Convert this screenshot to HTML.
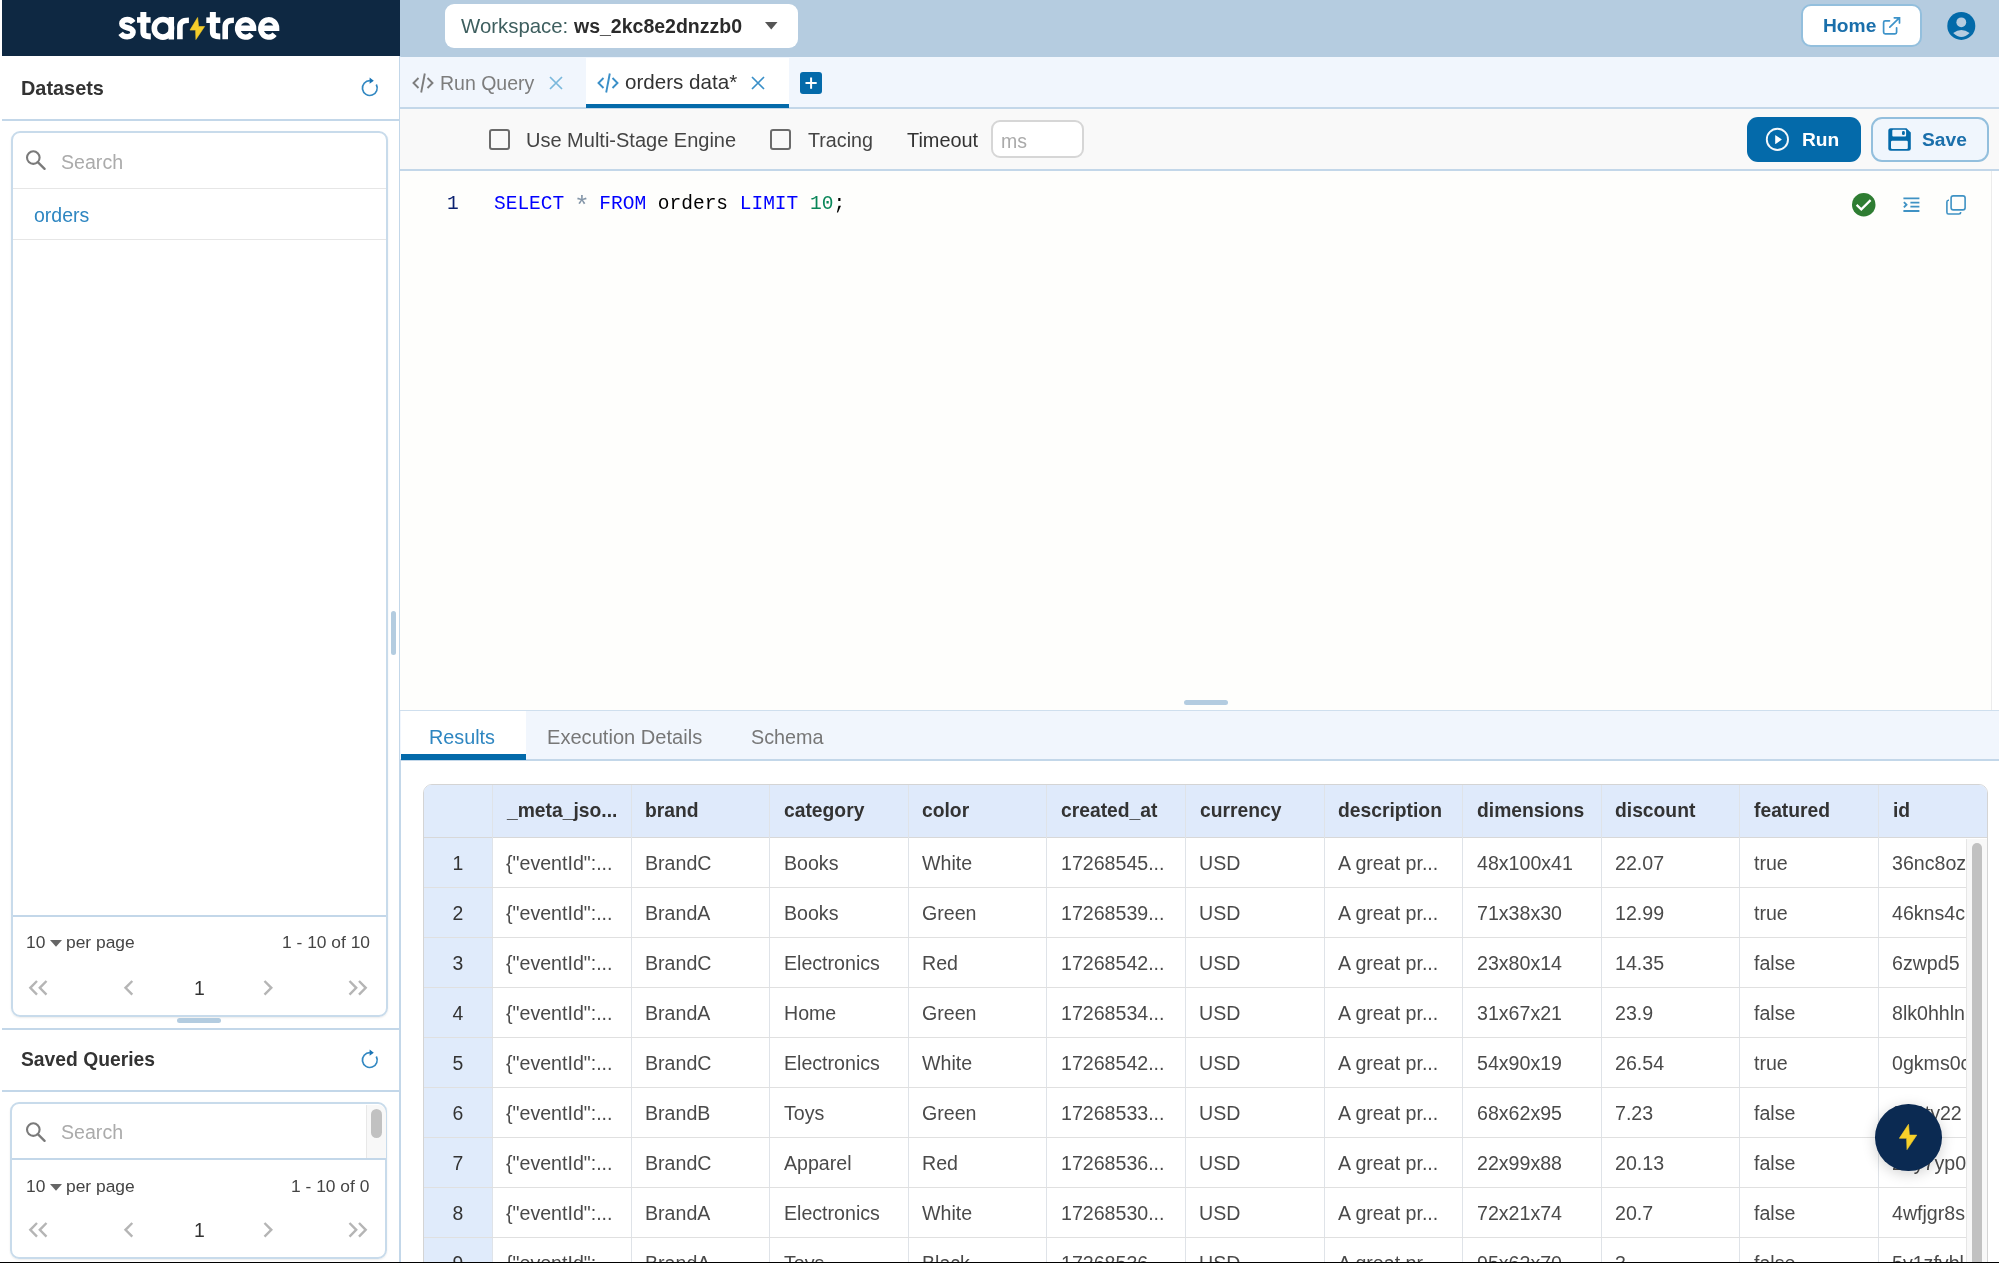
<!DOCTYPE html><html><head><meta charset="utf-8"><style>html,body{margin:0;padding:0;}div{will-change:transform;}body{width:1999px;height:1263px;overflow:hidden;position:relative;background:#fff;font-family:"Liberation Sans",sans-serif;}</style></head><body>
<div style="position:absolute;left:2px;top:0px;width:398px;height:56px;background:#0e2842;"></div>
<svg style="position:absolute;left:0px;top:0px;overflow:visible" width="400" height="56" viewBox="0 0 400 56"><g fill="none" stroke="#fff" stroke-width="5.6"><path d="M133.2 22.6 C131.8 20.6 129.8 19.6 127.2 19.6 C124 19.6 121.9 21.2 121.9 23.6 C121.9 26.2 124.3 27.1 127.4 27.8 C130.7 28.5 133 29.5 133 32.3 C133 35.1 130.6 36.7 127.2 36.7 C124.6 36.7 122.3 35.6 120.6 33.3"/><path d="M143.35 12 V31.5 C143.35 35.6 145.3 36.4 150.8 36.4" stroke-width="6"/><path d="M137 19.95 H150.6" stroke-width="5.6"/><ellipse cx="162.9" cy="28.3" rx="8.6" ry="8.8" stroke-width="5.6"/><path d="M171.3 17 V39.5" stroke-width="5.5"/><path d="M179.9 39.2 V27 C179.9 22 183 20.3 188.9 20.3" stroke-width="5.6"/><path d="M212.85 12 V31.5 C212.85 35.6 214.8 36.4 220.3 36.4" stroke-width="6"/><path d="M206.3 20.2 H220.3" stroke-width="5.6"/><path d="M225.2 39.2 V27 C225.2 22 228.2 20.3 233.9 20.3" stroke-width="5.6"/><path d="M237.4 28.3 H253.6 A8 8.7 0 1 0 251.6 34.2" stroke-width="5.4"/><path d="M260.9 28.3 H276.6 A7.9 8.7 0 1 0 274.6 34.2" stroke-width="5.4"/></g><path d="M197.6 17.5 L190 30.1 L195.6 30.1 L195.9 39.5 L204.6 26.5 L198.6 26.5 Z" fill="#f5cd2a" stroke="#f5cd2a" stroke-width="0.6" stroke-linejoin="round"/></svg>
<div style="position:absolute;left:400px;top:0px;width:1599px;height:57px;background:#b5cce0;"></div>
<div style="position:absolute;left:444.5px;top:3.5px;width:353px;height:44px;background:#fff;border-radius:9px;"></div>
<div style="position:absolute;left:460.50px;top:10.93px;line-height:30px;font-size:20.4px;font-family:'Liberation Sans', sans-serif;color:#3e5f5f;font-weight:400;white-space:pre;">Workspace:</div>
<div style="position:absolute;left:573.50px;top:11.24px;line-height:30px;font-size:19.5px;font-family:'Liberation Sans', sans-serif;color:#2b2b2b;font-weight:700;white-space:pre;">ws_2kc8e2dnzzb0</div>
<svg style="position:absolute;left:765px;top:22px;overflow:visible" width="13" height="8" viewBox="0 0 13 8"><path d="M0 0 L12.5 0 L6.25 7.5 Z" fill="#555"/></svg>
<div style="position:absolute;left:1801.3px;top:4px;width:120.8px;height:43.2px;background:#fff;border:2px solid #93bfdd;border-radius:10px;box-sizing:border-box;"></div>
<div style="position:absolute;left:1823.00px;top:11.35px;line-height:30px;font-size:19.2px;font-family:'Liberation Sans', sans-serif;color:#1a6fab;font-weight:700;white-space:pre;">Home</div>
<svg style="position:absolute;left:1883px;top:17px;overflow:visible" width="18" height="18" viewBox="0 0 18 18"><path d="M6.5 3.8 H2.2 Q0.6 3.8 0.6 5.4 V15.2 Q0.6 16.8 2.2 16.8 H12 Q13.6 16.8 13.6 15.2 V10.8" fill="none" stroke="#3d93c9" stroke-width="1.7" stroke-linecap="round"/><path d="M6.8 10.2 L16.3 0.9 M11.3 0.8 H16.5 V6" fill="none" stroke="#3d93c9" stroke-width="1.7" stroke-linecap="round"/></svg>
<svg style="position:absolute;left:1946.5px;top:12px;overflow:visible" width="28" height="28" viewBox="0 0 28 28"><circle cx="14.3" cy="13.9" r="14" fill="#036aa9"/><circle cx="14.3" cy="10.3" r="4.9" fill="#b5cce0"/><path d="M6.2 21 Q14.4 15.2 22.6 21 Q14.4 28.8 6.2 21 Z" fill="#b5cce0"/></svg>
<div style="position:absolute;left:398.7px;top:56px;width:1.6px;height:1207px;background:#c3d7e9;"></div>
<div style="position:absolute;left:20.50px;top:73.30px;line-height:30px;font-size:19.9px;font-family:'Liberation Sans', sans-serif;color:#333;font-weight:700;white-space:pre;">Datasets</div>
<svg style="position:absolute;left:361px;top:77px;overflow:visible" width="18" height="20" viewBox="0 0 18 20"><path d="M15.3 7.5 A7.4 7.4 0 1 1 8.9 3.65" fill="none" stroke="#3288c2" stroke-width="1.7"/><path d="M8.6 0.6 L12.8 3.65 L8.6 6.7 Z" fill="#1a74b4"/></svg>
<div style="position:absolute;left:2px;top:118.6px;width:397px;height:1.6px;background:#c3d7e9;"></div>
<div style="position:absolute;left:10.5px;top:131.3px;width:377px;height:885.5px;border:2px solid #c8dbeb;box-shadow:0 1px 2px rgba(0,0,0,0.08);border-radius:9px;box-sizing:border-box;"></div>
<svg style="position:absolute;left:26px;top:150px;overflow:visible" width="20" height="20" viewBox="0 0 20 20"><circle cx="7.3" cy="7.6" r="6.3" fill="none" stroke="#7a7a7a" stroke-width="2.1"/><path d="M11.8 12.1 L18.6 18.9" stroke="#7a7a7a" stroke-width="2.3" stroke-linecap="round"/></svg>
<div style="position:absolute;left:61.00px;top:146.51px;line-height:30px;font-size:19.6px;font-family:'Liberation Sans', sans-serif;color:#ababab;font-weight:400;white-space:pre;">Search</div>
<div style="position:absolute;left:12.5px;top:188px;width:373px;height:1.2px;background:#e6e6e6;"></div>
<div style="position:absolute;left:33.50px;top:199.74px;line-height:30px;font-size:19.5px;font-family:'Liberation Sans', sans-serif;color:#2e86c1;font-weight:400;white-space:pre;">orders</div>
<div style="position:absolute;left:12.5px;top:239.2px;width:373px;height:1.2px;background:#e6e6e6;"></div>
<div style="position:absolute;left:12.5px;top:914.6px;width:373px;height:1.6px;background:#c3d7e9;"></div>
<div style="position:absolute;left:25.50px;top:927.47px;line-height:30px;font-size:17.4px;font-family:'Liberation Sans', sans-serif;color:#444;font-weight:400;white-space:pre;">10</div>
<svg style="position:absolute;left:49.8px;top:940.2px;overflow:visible" width="12" height="7" viewBox="0 0 12 7"><path d="M0 0 L12 0 L6 6.7 Z" fill="#666"/></svg>
<div style="position:absolute;left:65.50px;top:927.47px;line-height:30px;font-size:17.4px;font-family:'Liberation Sans', sans-serif;color:#444;font-weight:400;white-space:pre;">per page</div>
<div style="position:absolute;right:1629.50px;top:927.47px;line-height:30px;font-size:17.4px;font-family:'Liberation Sans', sans-serif;color:#444;font-weight:400;white-space:pre;">1 - 10 of 10</div>
<svg style="position:absolute;left:28.3px;top:979.5px;overflow:visible" width="20" height="16" viewBox="0 0 20 16"><path d="M9 1 L2.3 7.8 L9 14.6 M18.5 1 L11.8 7.8 L18.5 14.6" fill="none" stroke="#b5b5b5" stroke-width="2.4"/></svg>
<svg style="position:absolute;left:123.3px;top:979.5px;overflow:visible" width="11" height="16" viewBox="0 0 11 16"><path d="M9.3 1 L2.5 7.8 L9.3 14.6" fill="none" stroke="#b5b5b5" stroke-width="2.4"/></svg>
<div style="position:absolute;left:194.00px;top:972.78px;line-height:30px;font-size:19.4px;font-family:'Liberation Sans', sans-serif;color:#333;font-weight:400;white-space:pre;">1</div>
<svg style="position:absolute;left:262.5px;top:979.5px;overflow:visible" width="11" height="16" viewBox="0 0 11 16"><path d="M1.5 1 L8.3 7.8 L1.5 14.6" fill="none" stroke="#b5b5b5" stroke-width="2.4"/></svg>
<svg style="position:absolute;left:347.6px;top:979.5px;overflow:visible" width="20" height="16" viewBox="0 0 20 16"><path d="M1.5 1 L8.2 7.8 L1.5 14.6 M11 1 L17.7 7.8 L11 14.6" fill="none" stroke="#b5b5b5" stroke-width="2.4"/></svg>
<div style="position:absolute;left:177px;top:1018px;width:44px;height:5px;background:#b3cce0;border-radius:3px;"></div>
<div style="position:absolute;left:390.5px;top:611px;width:5px;height:44px;background:#b3cce0;border-radius:3px;"></div>
<div style="position:absolute;left:2px;top:1027.6px;width:397px;height:1.6px;background:#c3d7e9;"></div>
<div style="position:absolute;left:20.50px;top:1044.61px;line-height:30px;font-size:19.3px;font-family:'Liberation Sans', sans-serif;color:#333;font-weight:700;white-space:pre;">Saved Queries</div>
<svg style="position:absolute;left:361px;top:1049px;overflow:visible" width="18" height="20" viewBox="0 0 18 20"><path d="M15.3 7.5 A7.4 7.4 0 1 1 8.9 3.65" fill="none" stroke="#3288c2" stroke-width="1.7"/><path d="M8.6 0.6 L12.8 3.65 L8.6 6.7 Z" fill="#1a74b4"/></svg>
<div style="position:absolute;left:2px;top:1090px;width:397px;height:1.6px;background:#c3d7e9;"></div>
<div style="position:absolute;left:10.3px;top:1102.3px;width:377px;height:157px;border:2px solid #c8dbeb;box-shadow:0 1px 2px rgba(0,0,0,0.08);border-radius:9px;box-sizing:border-box;"></div>
<svg style="position:absolute;left:26px;top:1121.5px;overflow:visible" width="20" height="20" viewBox="0 0 20 20"><circle cx="7.3" cy="7.6" r="6.3" fill="none" stroke="#7a7a7a" stroke-width="2.1"/><path d="M11.8 12.1 L18.6 18.9" stroke="#7a7a7a" stroke-width="2.3" stroke-linecap="round"/></svg>
<div style="position:absolute;left:61.00px;top:1117.01px;line-height:30px;font-size:19.6px;font-family:'Liberation Sans', sans-serif;color:#ababab;font-weight:400;white-space:pre;">Search</div>
<div style="position:absolute;left:366px;top:1104.5px;width:19.5px;height:54px;background:#f8f8f8;border-left:1px solid #e8e8e8;box-sizing:border-box;border-top-right-radius:8px;"></div>
<div style="position:absolute;left:371.2px;top:1108.5px;width:10.7px;height:29px;background:#c1c1c1;border-radius:6px;"></div>
<div style="position:absolute;left:12px;top:1157.7px;width:373.5px;height:1.6px;background:#c3d7e9;"></div>
<div style="position:absolute;left:25.50px;top:1170.77px;line-height:30px;font-size:17.4px;font-family:'Liberation Sans', sans-serif;color:#444;font-weight:400;white-space:pre;">10</div>
<svg style="position:absolute;left:49.8px;top:1183.5px;overflow:visible" width="12" height="7" viewBox="0 0 12 7"><path d="M0 0 L12 0 L6 6.7 Z" fill="#666"/></svg>
<div style="position:absolute;left:65.50px;top:1170.77px;line-height:30px;font-size:17.4px;font-family:'Liberation Sans', sans-serif;color:#444;font-weight:400;white-space:pre;">per page</div>
<div style="position:absolute;right:1629.50px;top:1170.77px;line-height:30px;font-size:17.4px;font-family:'Liberation Sans', sans-serif;color:#444;font-weight:400;white-space:pre;">1 - 10 of 0</div>
<svg style="position:absolute;left:28.3px;top:1222px;overflow:visible" width="20" height="16" viewBox="0 0 20 16"><path d="M9 1 L2.3 7.8 L9 14.6 M18.5 1 L11.8 7.8 L18.5 14.6" fill="none" stroke="#b5b5b5" stroke-width="2.4"/></svg>
<svg style="position:absolute;left:123.3px;top:1222px;overflow:visible" width="11" height="16" viewBox="0 0 11 16"><path d="M9.3 1 L2.5 7.8 L9.3 14.6" fill="none" stroke="#b5b5b5" stroke-width="2.4"/></svg>
<div style="position:absolute;left:194.00px;top:1215.28px;line-height:30px;font-size:19.4px;font-family:'Liberation Sans', sans-serif;color:#333;font-weight:400;white-space:pre;">1</div>
<svg style="position:absolute;left:262.5px;top:1222px;overflow:visible" width="11" height="16" viewBox="0 0 11 16"><path d="M1.5 1 L8.3 7.8 L1.5 14.6" fill="none" stroke="#b5b5b5" stroke-width="2.4"/></svg>
<svg style="position:absolute;left:347.6px;top:1222px;overflow:visible" width="20" height="16" viewBox="0 0 20 16"><path d="M1.5 1 L8.2 7.8 L1.5 14.6 M11 1 L17.7 7.8 L11 14.6" fill="none" stroke="#b5b5b5" stroke-width="2.4"/></svg>
<div style="position:absolute;left:400px;top:57px;width:1599px;height:51px;background:#f1f6fd;"></div>
<div style="position:absolute;left:400px;top:107.2px;width:1599px;height:1.7px;background:#c3d7e9;"></div>
<svg style="position:absolute;left:411.5px;top:73px;overflow:visible" width="22" height="20" viewBox="0 0 22 20"><path d="M6.5 5 L1.5 10 L6.5 15 M15.5 5 L20.5 10 L15.5 15" fill="none" stroke="#7d7d7d" stroke-width="1.9"/><path d="M12.8 0.5 L9.2 19.5" stroke="#7d7d7d" stroke-width="1.9"/></svg>
<div style="position:absolute;left:439.50px;top:68.24px;line-height:30px;font-size:19.5px;font-family:'Liberation Sans', sans-serif;color:#7d7d7d;font-weight:400;white-space:pre;">Run Query</div>
<svg style="position:absolute;left:548.5px;top:75.5px;overflow:visible" width="14" height="14" viewBox="0 0 14 14"><path d="M1 1 L13 13 M13 1 L1 13" stroke="#7ab8dc" stroke-width="1.7"/></svg>
<div style="position:absolute;left:586px;top:58px;width:202.5px;height:49.5px;background:#fff;"></div>
<div style="position:absolute;left:586px;top:103.5px;width:202.5px;height:4px;background:#046aaa;"></div>
<svg style="position:absolute;left:596.5px;top:73px;overflow:visible" width="22" height="20" viewBox="0 0 22 20"><path d="M6.5 5 L1.5 10 L6.5 15 M15.5 5 L20.5 10 L15.5 15" fill="none" stroke="#3a8fc8" stroke-width="1.9"/><path d="M12.8 0.5 L9.2 19.5" stroke="#3a8fc8" stroke-width="1.9"/></svg>
<div style="position:absolute;left:625.00px;top:67.26px;line-height:30px;font-size:20.6px;font-family:'Liberation Sans', sans-serif;color:#333;font-weight:400;white-space:pre;">orders data*</div>
<svg style="position:absolute;left:751px;top:75.5px;overflow:visible" width="14" height="14" viewBox="0 0 14 14"><path d="M1 1 L13 13 M13 1 L1 13" stroke="#3a8fc8" stroke-width="1.7"/></svg>
<div style="position:absolute;left:799.75px;top:71.6px;width:22.2px;height:22.2px;background:#046aaa;border-radius:3px;"></div>
<svg style="position:absolute;left:799.75px;top:71.6px;overflow:visible" width="22.2" height="22.2" viewBox="0 0 22.2 22.2"><path d="M11.1 5.5 V16.7 M5.5 11.1 H16.7" stroke="#fff" stroke-width="2"/></svg>
<div style="position:absolute;left:400px;top:108.7px;width:1599px;height:61px;background:#f9f9f9;"></div>
<div style="position:absolute;left:400px;top:169.2px;width:1599px;height:1.7px;background:#c3d7e9;"></div>
<div style="position:absolute;left:489px;top:128.6px;width:21px;height:21px;border:2px solid #6b6b6b;border-radius:3px;box-sizing:border-box;"></div>
<div style="position:absolute;left:526.00px;top:124.57px;line-height:30px;font-size:20.0px;font-family:'Liberation Sans', sans-serif;color:#444;font-weight:400;white-space:pre;">Use Multi-Stage Engine</div>
<div style="position:absolute;left:770px;top:129px;width:21px;height:21px;border:2px solid #6b6b6b;border-radius:3px;box-sizing:border-box;"></div>
<div style="position:absolute;left:808.00px;top:124.57px;line-height:30px;font-size:19.7px;font-family:'Liberation Sans', sans-serif;color:#444;font-weight:400;white-space:pre;">Tracing</div>
<div style="position:absolute;left:907.00px;top:124.50px;line-height:30px;font-size:19.9px;font-family:'Liberation Sans', sans-serif;color:#333;font-weight:400;white-space:pre;">Timeout</div>
<div style="position:absolute;left:990.7px;top:120.3px;width:92.7px;height:38px;background:#fff;border:2px solid #d6d6d6;border-radius:9px;box-sizing:border-box;"></div>
<div style="position:absolute;left:1001.00px;top:126.04px;line-height:30px;font-size:19.5px;font-family:'Liberation Sans', sans-serif;color:#aaaaaa;font-weight:400;white-space:pre;">ms</div>
<div style="position:absolute;left:1746.7px;top:117.1px;width:113.8px;height:44.7px;background:#046aaa;border-radius:11px;"></div>
<svg style="position:absolute;left:1765px;top:128px;overflow:visible" width="24" height="24" viewBox="0 0 24 24"><circle cx="12.4" cy="11.4" r="10.6" fill="none" stroke="#f4f8fb" stroke-width="1.9"/><path d="M10.2 7.4 V15.7 Q10.2 16.1 10.6 15.9 L16.6 11.8 Q16.9 11.5 16.6 11.3 L10.6 7.2 Q10.2 7 10.2 7.4 Z" fill="#fff"/></svg>
<div style="position:absolute;left:1802.00px;top:125.05px;line-height:30px;font-size:19.2px;font-family:'Liberation Sans', sans-serif;color:#fff;font-weight:700;white-space:pre;">Run</div>
<div style="position:absolute;left:1871.3px;top:117.2px;width:117.6px;height:44.6px;background:#f0f6fd;border:2px solid #93bfdd;border-radius:11px;box-sizing:border-box;"></div>
<svg style="position:absolute;left:1888px;top:128px;overflow:visible" width="23" height="23" viewBox="0 0 23 23"><path d="M2.8 0.3 H18.5 L22.8 4.6 V20.2 Q22.8 22.7 20.3 22.7 H2.8 Q0.3 22.7 0.3 20.2 V2.8 Q0.3 0.3 2.8 0.3 Z" fill="#046aaa"/><rect x="4.3" y="1.8" width="13.8" height="6.7" rx="1" fill="#f0f6fd"/><rect x="14" y="3.1" width="2.8" height="4" rx="1.3" fill="#046aaa"/><rect x="3" y="12.7" width="16.8" height="8.3" rx="1.2" fill="#f0f6fd"/></svg>
<div style="position:absolute;left:1921.50px;top:125.05px;line-height:30px;font-size:19.2px;font-family:'Liberation Sans', sans-serif;color:#1a6fab;font-weight:700;white-space:pre;">Save</div>
<div style="position:absolute;left:400px;top:170.7px;width:1591px;height:539.3px;background:#fefefc;"></div>
<div style="position:absolute;left:1991px;top:170.7px;width:1px;height:539.3px;background:#ececec;"></div>
<div style="position:absolute;left:447.00px;top:188.55px;line-height:30px;font-size:19.5px;font-family:'Liberation Mono', monospace;color:#0b216f;font-weight:400;white-space:pre;">1</div>
<div style="position:absolute;left:494.00px;top:188.55px;line-height:30px;font-size:19.5px;font-family:'Liberation Mono', monospace;color:#000;font-weight:400;white-space:pre;"><span style="color:#0000ff">SELECT</span> <span style="color:#8496a8;display:inline-block;transform:translateY(3.5px) scale(1.35)">*</span> <span style="color:#0000ff">FROM</span> <span style="color:#000">orders</span> <span style="color:#0000ff">LIMIT</span> <span style="color:#098658">10</span><span style="color:#000">;</span></div>
<svg style="position:absolute;left:1852.3px;top:192.7px;overflow:visible" width="23.5" height="23.5" viewBox="0 0 23.5 23.5"><circle cx="11.75" cy="11.75" r="11.75" fill="#2e7d32"/><path d="M4.6 11.9 L9.3 16.4 L18.6 7.1" fill="none" stroke="#fff" stroke-width="2.2"/></svg>
<svg style="position:absolute;left:1902.8px;top:197px;overflow:visible" width="17" height="15" viewBox="0 0 17 15"><path d="M0.4 1.3 H16.4 M7.4 5.6 H16.4 M7.4 9.7 H16.4 M0.4 14 H16.4" stroke="#3f92c4" stroke-width="1.8"/><path d="M0.9 5.1 L3.5 7.7 L0.9 10.4" fill="none" stroke="#3f92c4" stroke-width="1.9"/></svg>
<svg style="position:absolute;left:1945.8px;top:194.7px;overflow:visible" width="20" height="20" viewBox="0 0 20 20"><rect x="5.1" y="0.9" width="14" height="14" rx="2.2" fill="none" stroke="#3f92c4" stroke-width="1.6"/><path d="M3 5.3 H2.5 Q0.9 5.3 0.9 7 V17.3 Q0.9 19 2.5 19 H12.9 Q14.6 19 14.6 17.3 V16.9" fill="none" stroke="#3f92c4" stroke-width="1.6"/></svg>
<div style="position:absolute;left:1183.8px;top:700px;width:44px;height:5.3px;background:#b3cce0;border-radius:3px;"></div>
<div style="position:absolute;left:400px;top:710px;width:1599px;height:50px;background:#f1f6fd;"></div>
<div style="position:absolute;left:400px;top:709.7px;width:1599px;height:1.2px;background:#cfdfee;"></div>
<div style="position:absolute;left:400px;top:758.8px;width:1599px;height:1.7px;background:#c3d7e9;"></div>
<div style="position:absolute;left:400.5px;top:711px;width:124.5px;height:48.5px;background:#fff;"></div>
<div style="position:absolute;left:400.5px;top:754px;width:124.5px;height:5.5px;background:#046aaa;"></div>
<div style="position:absolute;left:429.00px;top:722.34px;line-height:30px;font-size:19.8px;font-family:'Liberation Sans', sans-serif;color:#2e86c1;font-weight:400;white-space:pre;">Results</div>
<div style="position:absolute;left:547.00px;top:722.24px;line-height:30px;font-size:20.1px;font-family:'Liberation Sans', sans-serif;color:#777;font-weight:400;white-space:pre;">Execution Details</div>
<div style="position:absolute;left:751.00px;top:722.34px;line-height:30px;font-size:19.8px;font-family:'Liberation Sans', sans-serif;color:#777;font-weight:400;white-space:pre;">Schema</div>
<div style="position:absolute;left:423.3px;top:783.7px;width:1565.0px;height:600px;border:1.5px solid #d4d4d4;border-radius:9px 9px 0 0;box-sizing:border-box;overflow:hidden;background:#fff;">
<div style="position:absolute;left:0;top:0;width:1565.0px;height:52.299999999999955px;background:#dfeafb;"></div>
<div style="position:absolute;left:0;top:0;width:68.39999999999998px;height:600px;background:#e0ebfb;"></div>
<div style="position:absolute;left:0;top:52.299999999999955px;width:1565.0px;height:1.3px;background:#d8d8d8;"></div>
<div style="position:absolute;left:67.90px;top:0;width:1.2px;height:600px;background:#dfe3e8;"></div>
<div style="position:absolute;left:206.50px;top:0;width:1.2px;height:600px;background:#dfe3e8;"></div>
<div style="position:absolute;left:345.10px;top:0;width:1.2px;height:600px;background:#dfe3e8;"></div>
<div style="position:absolute;left:483.70px;top:0;width:1.2px;height:600px;background:#dfe3e8;"></div>
<div style="position:absolute;left:622.30px;top:0;width:1.2px;height:600px;background:#dfe3e8;"></div>
<div style="position:absolute;left:760.90px;top:0;width:1.2px;height:600px;background:#dfe3e8;"></div>
<div style="position:absolute;left:899.50px;top:0;width:1.2px;height:600px;background:#dfe3e8;"></div>
<div style="position:absolute;left:1038.10px;top:0;width:1.2px;height:600px;background:#dfe3e8;"></div>
<div style="position:absolute;left:1176.70px;top:0;width:1.2px;height:600px;background:#dfe3e8;"></div>
<div style="position:absolute;left:1315.30px;top:0;width:1.2px;height:600px;background:#dfe3e8;"></div>
<div style="position:absolute;left:1453.90px;top:0;width:1.2px;height:600px;background:#dfe3e8;"></div>
<div style="position:absolute;left:0;top:102.00px;width:1565.0px;height:1.3px;background:#e0e0e0;"></div>
<div style="position:absolute;left:0;top:152.00px;width:1565.0px;height:1.3px;background:#e0e0e0;"></div>
<div style="position:absolute;left:0;top:202.00px;width:1565.0px;height:1.3px;background:#e0e0e0;"></div>
<div style="position:absolute;left:0;top:252.00px;width:1565.0px;height:1.3px;background:#e0e0e0;"></div>
<div style="position:absolute;left:0;top:302.00px;width:1565.0px;height:1.3px;background:#e0e0e0;"></div>
<div style="position:absolute;left:0;top:352.00px;width:1565.0px;height:1.3px;background:#e0e0e0;"></div>
<div style="position:absolute;left:0;top:402.00px;width:1565.0px;height:1.3px;background:#e0e0e0;"></div>
<div style="position:absolute;left:0;top:452.00px;width:1565.0px;height:1.3px;background:#e0e0e0;"></div>
<div style="position:absolute;left:0;top:502.00px;width:1565.0px;height:1.3px;background:#e0e0e0;"></div>
<div style="position:absolute;left:82.60px;top:11.11px;line-height:30px;font-size:19.3px;font-family:'Liberation Sans', sans-serif;color:#333;font-weight:700;white-space:pre;">_meta_jso...</div>
<div style="position:absolute;left:221.20px;top:11.11px;line-height:30px;font-size:19.3px;font-family:'Liberation Sans', sans-serif;color:#333;font-weight:700;white-space:pre;">brand</div>
<div style="position:absolute;left:359.80px;top:11.11px;line-height:30px;font-size:19.3px;font-family:'Liberation Sans', sans-serif;color:#333;font-weight:700;white-space:pre;">category</div>
<div style="position:absolute;left:498.40px;top:11.11px;line-height:30px;font-size:19.3px;font-family:'Liberation Sans', sans-serif;color:#333;font-weight:700;white-space:pre;">color</div>
<div style="position:absolute;left:637.00px;top:11.11px;line-height:30px;font-size:19.3px;font-family:'Liberation Sans', sans-serif;color:#333;font-weight:700;white-space:pre;">created_at</div>
<div style="position:absolute;left:775.60px;top:11.11px;line-height:30px;font-size:19.3px;font-family:'Liberation Sans', sans-serif;color:#333;font-weight:700;white-space:pre;">currency</div>
<div style="position:absolute;left:914.20px;top:11.11px;line-height:30px;font-size:19.3px;font-family:'Liberation Sans', sans-serif;color:#333;font-weight:700;white-space:pre;">description</div>
<div style="position:absolute;left:1052.80px;top:11.11px;line-height:30px;font-size:19.3px;font-family:'Liberation Sans', sans-serif;color:#333;font-weight:700;white-space:pre;">dimensions</div>
<div style="position:absolute;left:1191.40px;top:11.11px;line-height:30px;font-size:19.3px;font-family:'Liberation Sans', sans-serif;color:#333;font-weight:700;white-space:pre;">discount</div>
<div style="position:absolute;left:1330.00px;top:11.11px;line-height:30px;font-size:19.3px;font-family:'Liberation Sans', sans-serif;color:#333;font-weight:700;white-space:pre;">featured</div>
<div style="position:absolute;left:1468.60px;top:11.11px;line-height:30px;font-size:19.3px;font-family:'Liberation Sans', sans-serif;color:#333;font-weight:700;white-space:pre;">id</div>
<div style="position:absolute;left:-6.20px;width:80px;text-align:center;top:63.08px;line-height:30px;font-size:19.4px;font-family:'Liberation Sans', sans-serif;color:#333;font-weight:400;white-space:pre;">1</div>
<div style="position:absolute;left:82.40px;top:63.01px;line-height:30px;font-size:19.6px;font-family:'Liberation Sans', sans-serif;color:#4a4a4a;font-weight:400;white-space:pre;">{&quot;eventId&quot;:...</div>
<div style="position:absolute;left:221.00px;top:63.01px;line-height:30px;font-size:19.6px;font-family:'Liberation Sans', sans-serif;color:#4a4a4a;font-weight:400;white-space:pre;">BrandC</div>
<div style="position:absolute;left:359.60px;top:63.01px;line-height:30px;font-size:19.6px;font-family:'Liberation Sans', sans-serif;color:#4a4a4a;font-weight:400;white-space:pre;">Books</div>
<div style="position:absolute;left:498.20px;top:63.01px;line-height:30px;font-size:19.6px;font-family:'Liberation Sans', sans-serif;color:#4a4a4a;font-weight:400;white-space:pre;">White</div>
<div style="position:absolute;left:636.80px;top:63.01px;line-height:30px;font-size:19.6px;font-family:'Liberation Sans', sans-serif;color:#4a4a4a;font-weight:400;white-space:pre;">17268545...</div>
<div style="position:absolute;left:775.40px;top:63.01px;line-height:30px;font-size:19.6px;font-family:'Liberation Sans', sans-serif;color:#4a4a4a;font-weight:400;white-space:pre;">USD</div>
<div style="position:absolute;left:914.00px;top:63.01px;line-height:30px;font-size:19.6px;font-family:'Liberation Sans', sans-serif;color:#4a4a4a;font-weight:400;white-space:pre;">A great pr...</div>
<div style="position:absolute;left:1052.60px;top:63.01px;line-height:30px;font-size:19.6px;font-family:'Liberation Sans', sans-serif;color:#4a4a4a;font-weight:400;white-space:pre;">48x100x41</div>
<div style="position:absolute;left:1191.20px;top:63.01px;line-height:30px;font-size:19.6px;font-family:'Liberation Sans', sans-serif;color:#4a4a4a;font-weight:400;white-space:pre;">22.07</div>
<div style="position:absolute;left:1329.80px;top:63.01px;line-height:30px;font-size:19.6px;font-family:'Liberation Sans', sans-serif;color:#4a4a4a;font-weight:400;white-space:pre;">true</div>
<div style="position:absolute;left:1468.40px;top:63.01px;line-height:30px;font-size:19.6px;font-family:'Liberation Sans', sans-serif;color:#4a4a4a;font-weight:400;white-space:pre;">36nc8oz</div>
<div style="position:absolute;left:-6.20px;width:80px;text-align:center;top:113.08px;line-height:30px;font-size:19.4px;font-family:'Liberation Sans', sans-serif;color:#333;font-weight:400;white-space:pre;">2</div>
<div style="position:absolute;left:82.40px;top:113.01px;line-height:30px;font-size:19.6px;font-family:'Liberation Sans', sans-serif;color:#4a4a4a;font-weight:400;white-space:pre;">{&quot;eventId&quot;:...</div>
<div style="position:absolute;left:221.00px;top:113.01px;line-height:30px;font-size:19.6px;font-family:'Liberation Sans', sans-serif;color:#4a4a4a;font-weight:400;white-space:pre;">BrandA</div>
<div style="position:absolute;left:359.60px;top:113.01px;line-height:30px;font-size:19.6px;font-family:'Liberation Sans', sans-serif;color:#4a4a4a;font-weight:400;white-space:pre;">Books</div>
<div style="position:absolute;left:498.20px;top:113.01px;line-height:30px;font-size:19.6px;font-family:'Liberation Sans', sans-serif;color:#4a4a4a;font-weight:400;white-space:pre;">Green</div>
<div style="position:absolute;left:636.80px;top:113.01px;line-height:30px;font-size:19.6px;font-family:'Liberation Sans', sans-serif;color:#4a4a4a;font-weight:400;white-space:pre;">17268539...</div>
<div style="position:absolute;left:775.40px;top:113.01px;line-height:30px;font-size:19.6px;font-family:'Liberation Sans', sans-serif;color:#4a4a4a;font-weight:400;white-space:pre;">USD</div>
<div style="position:absolute;left:914.00px;top:113.01px;line-height:30px;font-size:19.6px;font-family:'Liberation Sans', sans-serif;color:#4a4a4a;font-weight:400;white-space:pre;">A great pr...</div>
<div style="position:absolute;left:1052.60px;top:113.01px;line-height:30px;font-size:19.6px;font-family:'Liberation Sans', sans-serif;color:#4a4a4a;font-weight:400;white-space:pre;">71x38x30</div>
<div style="position:absolute;left:1191.20px;top:113.01px;line-height:30px;font-size:19.6px;font-family:'Liberation Sans', sans-serif;color:#4a4a4a;font-weight:400;white-space:pre;">12.99</div>
<div style="position:absolute;left:1329.80px;top:113.01px;line-height:30px;font-size:19.6px;font-family:'Liberation Sans', sans-serif;color:#4a4a4a;font-weight:400;white-space:pre;">true</div>
<div style="position:absolute;left:1468.40px;top:113.01px;line-height:30px;font-size:19.6px;font-family:'Liberation Sans', sans-serif;color:#4a4a4a;font-weight:400;white-space:pre;">46kns4c</div>
<div style="position:absolute;left:-6.20px;width:80px;text-align:center;top:163.08px;line-height:30px;font-size:19.4px;font-family:'Liberation Sans', sans-serif;color:#333;font-weight:400;white-space:pre;">3</div>
<div style="position:absolute;left:82.40px;top:163.01px;line-height:30px;font-size:19.6px;font-family:'Liberation Sans', sans-serif;color:#4a4a4a;font-weight:400;white-space:pre;">{&quot;eventId&quot;:...</div>
<div style="position:absolute;left:221.00px;top:163.01px;line-height:30px;font-size:19.6px;font-family:'Liberation Sans', sans-serif;color:#4a4a4a;font-weight:400;white-space:pre;">BrandC</div>
<div style="position:absolute;left:359.60px;top:163.01px;line-height:30px;font-size:19.6px;font-family:'Liberation Sans', sans-serif;color:#4a4a4a;font-weight:400;white-space:pre;">Electronics</div>
<div style="position:absolute;left:498.20px;top:163.01px;line-height:30px;font-size:19.6px;font-family:'Liberation Sans', sans-serif;color:#4a4a4a;font-weight:400;white-space:pre;">Red</div>
<div style="position:absolute;left:636.80px;top:163.01px;line-height:30px;font-size:19.6px;font-family:'Liberation Sans', sans-serif;color:#4a4a4a;font-weight:400;white-space:pre;">17268542...</div>
<div style="position:absolute;left:775.40px;top:163.01px;line-height:30px;font-size:19.6px;font-family:'Liberation Sans', sans-serif;color:#4a4a4a;font-weight:400;white-space:pre;">USD</div>
<div style="position:absolute;left:914.00px;top:163.01px;line-height:30px;font-size:19.6px;font-family:'Liberation Sans', sans-serif;color:#4a4a4a;font-weight:400;white-space:pre;">A great pr...</div>
<div style="position:absolute;left:1052.60px;top:163.01px;line-height:30px;font-size:19.6px;font-family:'Liberation Sans', sans-serif;color:#4a4a4a;font-weight:400;white-space:pre;">23x80x14</div>
<div style="position:absolute;left:1191.20px;top:163.01px;line-height:30px;font-size:19.6px;font-family:'Liberation Sans', sans-serif;color:#4a4a4a;font-weight:400;white-space:pre;">14.35</div>
<div style="position:absolute;left:1329.80px;top:163.01px;line-height:30px;font-size:19.6px;font-family:'Liberation Sans', sans-serif;color:#4a4a4a;font-weight:400;white-space:pre;">false</div>
<div style="position:absolute;left:1468.40px;top:163.01px;line-height:30px;font-size:19.6px;font-family:'Liberation Sans', sans-serif;color:#4a4a4a;font-weight:400;white-space:pre;">6zwpd5</div>
<div style="position:absolute;left:-6.20px;width:80px;text-align:center;top:213.08px;line-height:30px;font-size:19.4px;font-family:'Liberation Sans', sans-serif;color:#333;font-weight:400;white-space:pre;">4</div>
<div style="position:absolute;left:82.40px;top:213.01px;line-height:30px;font-size:19.6px;font-family:'Liberation Sans', sans-serif;color:#4a4a4a;font-weight:400;white-space:pre;">{&quot;eventId&quot;:...</div>
<div style="position:absolute;left:221.00px;top:213.01px;line-height:30px;font-size:19.6px;font-family:'Liberation Sans', sans-serif;color:#4a4a4a;font-weight:400;white-space:pre;">BrandA</div>
<div style="position:absolute;left:359.60px;top:213.01px;line-height:30px;font-size:19.6px;font-family:'Liberation Sans', sans-serif;color:#4a4a4a;font-weight:400;white-space:pre;">Home</div>
<div style="position:absolute;left:498.20px;top:213.01px;line-height:30px;font-size:19.6px;font-family:'Liberation Sans', sans-serif;color:#4a4a4a;font-weight:400;white-space:pre;">Green</div>
<div style="position:absolute;left:636.80px;top:213.01px;line-height:30px;font-size:19.6px;font-family:'Liberation Sans', sans-serif;color:#4a4a4a;font-weight:400;white-space:pre;">17268534...</div>
<div style="position:absolute;left:775.40px;top:213.01px;line-height:30px;font-size:19.6px;font-family:'Liberation Sans', sans-serif;color:#4a4a4a;font-weight:400;white-space:pre;">USD</div>
<div style="position:absolute;left:914.00px;top:213.01px;line-height:30px;font-size:19.6px;font-family:'Liberation Sans', sans-serif;color:#4a4a4a;font-weight:400;white-space:pre;">A great pr...</div>
<div style="position:absolute;left:1052.60px;top:213.01px;line-height:30px;font-size:19.6px;font-family:'Liberation Sans', sans-serif;color:#4a4a4a;font-weight:400;white-space:pre;">31x67x21</div>
<div style="position:absolute;left:1191.20px;top:213.01px;line-height:30px;font-size:19.6px;font-family:'Liberation Sans', sans-serif;color:#4a4a4a;font-weight:400;white-space:pre;">23.9</div>
<div style="position:absolute;left:1329.80px;top:213.01px;line-height:30px;font-size:19.6px;font-family:'Liberation Sans', sans-serif;color:#4a4a4a;font-weight:400;white-space:pre;">false</div>
<div style="position:absolute;left:1468.40px;top:213.01px;line-height:30px;font-size:19.6px;font-family:'Liberation Sans', sans-serif;color:#4a4a4a;font-weight:400;white-space:pre;">8lk0hhln</div>
<div style="position:absolute;left:-6.20px;width:80px;text-align:center;top:263.08px;line-height:30px;font-size:19.4px;font-family:'Liberation Sans', sans-serif;color:#333;font-weight:400;white-space:pre;">5</div>
<div style="position:absolute;left:82.40px;top:263.01px;line-height:30px;font-size:19.6px;font-family:'Liberation Sans', sans-serif;color:#4a4a4a;font-weight:400;white-space:pre;">{&quot;eventId&quot;:...</div>
<div style="position:absolute;left:221.00px;top:263.01px;line-height:30px;font-size:19.6px;font-family:'Liberation Sans', sans-serif;color:#4a4a4a;font-weight:400;white-space:pre;">BrandC</div>
<div style="position:absolute;left:359.60px;top:263.01px;line-height:30px;font-size:19.6px;font-family:'Liberation Sans', sans-serif;color:#4a4a4a;font-weight:400;white-space:pre;">Electronics</div>
<div style="position:absolute;left:498.20px;top:263.01px;line-height:30px;font-size:19.6px;font-family:'Liberation Sans', sans-serif;color:#4a4a4a;font-weight:400;white-space:pre;">White</div>
<div style="position:absolute;left:636.80px;top:263.01px;line-height:30px;font-size:19.6px;font-family:'Liberation Sans', sans-serif;color:#4a4a4a;font-weight:400;white-space:pre;">17268542...</div>
<div style="position:absolute;left:775.40px;top:263.01px;line-height:30px;font-size:19.6px;font-family:'Liberation Sans', sans-serif;color:#4a4a4a;font-weight:400;white-space:pre;">USD</div>
<div style="position:absolute;left:914.00px;top:263.01px;line-height:30px;font-size:19.6px;font-family:'Liberation Sans', sans-serif;color:#4a4a4a;font-weight:400;white-space:pre;">A great pr...</div>
<div style="position:absolute;left:1052.60px;top:263.01px;line-height:30px;font-size:19.6px;font-family:'Liberation Sans', sans-serif;color:#4a4a4a;font-weight:400;white-space:pre;">54x90x19</div>
<div style="position:absolute;left:1191.20px;top:263.01px;line-height:30px;font-size:19.6px;font-family:'Liberation Sans', sans-serif;color:#4a4a4a;font-weight:400;white-space:pre;">26.54</div>
<div style="position:absolute;left:1329.80px;top:263.01px;line-height:30px;font-size:19.6px;font-family:'Liberation Sans', sans-serif;color:#4a4a4a;font-weight:400;white-space:pre;">true</div>
<div style="position:absolute;left:1468.40px;top:263.01px;line-height:30px;font-size:19.6px;font-family:'Liberation Sans', sans-serif;color:#4a4a4a;font-weight:400;white-space:pre;">0gkms0c</div>
<div style="position:absolute;left:-6.20px;width:80px;text-align:center;top:313.08px;line-height:30px;font-size:19.4px;font-family:'Liberation Sans', sans-serif;color:#333;font-weight:400;white-space:pre;">6</div>
<div style="position:absolute;left:82.40px;top:313.01px;line-height:30px;font-size:19.6px;font-family:'Liberation Sans', sans-serif;color:#4a4a4a;font-weight:400;white-space:pre;">{&quot;eventId&quot;:...</div>
<div style="position:absolute;left:221.00px;top:313.01px;line-height:30px;font-size:19.6px;font-family:'Liberation Sans', sans-serif;color:#4a4a4a;font-weight:400;white-space:pre;">BrandB</div>
<div style="position:absolute;left:359.60px;top:313.01px;line-height:30px;font-size:19.6px;font-family:'Liberation Sans', sans-serif;color:#4a4a4a;font-weight:400;white-space:pre;">Toys</div>
<div style="position:absolute;left:498.20px;top:313.01px;line-height:30px;font-size:19.6px;font-family:'Liberation Sans', sans-serif;color:#4a4a4a;font-weight:400;white-space:pre;">Green</div>
<div style="position:absolute;left:636.80px;top:313.01px;line-height:30px;font-size:19.6px;font-family:'Liberation Sans', sans-serif;color:#4a4a4a;font-weight:400;white-space:pre;">17268533...</div>
<div style="position:absolute;left:775.40px;top:313.01px;line-height:30px;font-size:19.6px;font-family:'Liberation Sans', sans-serif;color:#4a4a4a;font-weight:400;white-space:pre;">USD</div>
<div style="position:absolute;left:914.00px;top:313.01px;line-height:30px;font-size:19.6px;font-family:'Liberation Sans', sans-serif;color:#4a4a4a;font-weight:400;white-space:pre;">A great pr...</div>
<div style="position:absolute;left:1052.60px;top:313.01px;line-height:30px;font-size:19.6px;font-family:'Liberation Sans', sans-serif;color:#4a4a4a;font-weight:400;white-space:pre;">68x62x95</div>
<div style="position:absolute;left:1191.20px;top:313.01px;line-height:30px;font-size:19.6px;font-family:'Liberation Sans', sans-serif;color:#4a4a4a;font-weight:400;white-space:pre;">7.23</div>
<div style="position:absolute;left:1329.80px;top:313.01px;line-height:30px;font-size:19.6px;font-family:'Liberation Sans', sans-serif;color:#4a4a4a;font-weight:400;white-space:pre;">false</div>
<div style="position:absolute;left:1468.40px;top:313.01px;line-height:30px;font-size:19.6px;font-family:'Liberation Sans', sans-serif;color:#4a4a4a;font-weight:400;white-space:pre;">9n2ty22</div>
<div style="position:absolute;left:-6.20px;width:80px;text-align:center;top:363.08px;line-height:30px;font-size:19.4px;font-family:'Liberation Sans', sans-serif;color:#333;font-weight:400;white-space:pre;">7</div>
<div style="position:absolute;left:82.40px;top:363.01px;line-height:30px;font-size:19.6px;font-family:'Liberation Sans', sans-serif;color:#4a4a4a;font-weight:400;white-space:pre;">{&quot;eventId&quot;:...</div>
<div style="position:absolute;left:221.00px;top:363.01px;line-height:30px;font-size:19.6px;font-family:'Liberation Sans', sans-serif;color:#4a4a4a;font-weight:400;white-space:pre;">BrandC</div>
<div style="position:absolute;left:359.60px;top:363.01px;line-height:30px;font-size:19.6px;font-family:'Liberation Sans', sans-serif;color:#4a4a4a;font-weight:400;white-space:pre;">Apparel</div>
<div style="position:absolute;left:498.20px;top:363.01px;line-height:30px;font-size:19.6px;font-family:'Liberation Sans', sans-serif;color:#4a4a4a;font-weight:400;white-space:pre;">Red</div>
<div style="position:absolute;left:636.80px;top:363.01px;line-height:30px;font-size:19.6px;font-family:'Liberation Sans', sans-serif;color:#4a4a4a;font-weight:400;white-space:pre;">17268536...</div>
<div style="position:absolute;left:775.40px;top:363.01px;line-height:30px;font-size:19.6px;font-family:'Liberation Sans', sans-serif;color:#4a4a4a;font-weight:400;white-space:pre;">USD</div>
<div style="position:absolute;left:914.00px;top:363.01px;line-height:30px;font-size:19.6px;font-family:'Liberation Sans', sans-serif;color:#4a4a4a;font-weight:400;white-space:pre;">A great pr...</div>
<div style="position:absolute;left:1052.60px;top:363.01px;line-height:30px;font-size:19.6px;font-family:'Liberation Sans', sans-serif;color:#4a4a4a;font-weight:400;white-space:pre;">22x99x88</div>
<div style="position:absolute;left:1191.20px;top:363.01px;line-height:30px;font-size:19.6px;font-family:'Liberation Sans', sans-serif;color:#4a4a4a;font-weight:400;white-space:pre;">20.13</div>
<div style="position:absolute;left:1329.80px;top:363.01px;line-height:30px;font-size:19.6px;font-family:'Liberation Sans', sans-serif;color:#4a4a4a;font-weight:400;white-space:pre;">false</div>
<div style="position:absolute;left:1468.40px;top:363.01px;line-height:30px;font-size:19.6px;font-family:'Liberation Sans', sans-serif;color:#4a4a4a;font-weight:400;white-space:pre;">22y7yp0</div>
<div style="position:absolute;left:-6.20px;width:80px;text-align:center;top:413.08px;line-height:30px;font-size:19.4px;font-family:'Liberation Sans', sans-serif;color:#333;font-weight:400;white-space:pre;">8</div>
<div style="position:absolute;left:82.40px;top:413.01px;line-height:30px;font-size:19.6px;font-family:'Liberation Sans', sans-serif;color:#4a4a4a;font-weight:400;white-space:pre;">{&quot;eventId&quot;:...</div>
<div style="position:absolute;left:221.00px;top:413.01px;line-height:30px;font-size:19.6px;font-family:'Liberation Sans', sans-serif;color:#4a4a4a;font-weight:400;white-space:pre;">BrandA</div>
<div style="position:absolute;left:359.60px;top:413.01px;line-height:30px;font-size:19.6px;font-family:'Liberation Sans', sans-serif;color:#4a4a4a;font-weight:400;white-space:pre;">Electronics</div>
<div style="position:absolute;left:498.20px;top:413.01px;line-height:30px;font-size:19.6px;font-family:'Liberation Sans', sans-serif;color:#4a4a4a;font-weight:400;white-space:pre;">White</div>
<div style="position:absolute;left:636.80px;top:413.01px;line-height:30px;font-size:19.6px;font-family:'Liberation Sans', sans-serif;color:#4a4a4a;font-weight:400;white-space:pre;">17268530...</div>
<div style="position:absolute;left:775.40px;top:413.01px;line-height:30px;font-size:19.6px;font-family:'Liberation Sans', sans-serif;color:#4a4a4a;font-weight:400;white-space:pre;">USD</div>
<div style="position:absolute;left:914.00px;top:413.01px;line-height:30px;font-size:19.6px;font-family:'Liberation Sans', sans-serif;color:#4a4a4a;font-weight:400;white-space:pre;">A great pr...</div>
<div style="position:absolute;left:1052.60px;top:413.01px;line-height:30px;font-size:19.6px;font-family:'Liberation Sans', sans-serif;color:#4a4a4a;font-weight:400;white-space:pre;">72x21x74</div>
<div style="position:absolute;left:1191.20px;top:413.01px;line-height:30px;font-size:19.6px;font-family:'Liberation Sans', sans-serif;color:#4a4a4a;font-weight:400;white-space:pre;">20.7</div>
<div style="position:absolute;left:1329.80px;top:413.01px;line-height:30px;font-size:19.6px;font-family:'Liberation Sans', sans-serif;color:#4a4a4a;font-weight:400;white-space:pre;">false</div>
<div style="position:absolute;left:1468.40px;top:413.01px;line-height:30px;font-size:19.6px;font-family:'Liberation Sans', sans-serif;color:#4a4a4a;font-weight:400;white-space:pre;">4wfjgr8s</div>
<div style="position:absolute;left:-6.20px;width:80px;text-align:center;top:463.08px;line-height:30px;font-size:19.4px;font-family:'Liberation Sans', sans-serif;color:#333;font-weight:400;white-space:pre;">9</div>
<div style="position:absolute;left:82.40px;top:463.01px;line-height:30px;font-size:19.6px;font-family:'Liberation Sans', sans-serif;color:#4a4a4a;font-weight:400;white-space:pre;">{&quot;eventId&quot;:...</div>
<div style="position:absolute;left:221.00px;top:463.01px;line-height:30px;font-size:19.6px;font-family:'Liberation Sans', sans-serif;color:#4a4a4a;font-weight:400;white-space:pre;">BrandA</div>
<div style="position:absolute;left:359.60px;top:463.01px;line-height:30px;font-size:19.6px;font-family:'Liberation Sans', sans-serif;color:#4a4a4a;font-weight:400;white-space:pre;">Toys</div>
<div style="position:absolute;left:498.20px;top:463.01px;line-height:30px;font-size:19.6px;font-family:'Liberation Sans', sans-serif;color:#4a4a4a;font-weight:400;white-space:pre;">Black</div>
<div style="position:absolute;left:636.80px;top:463.01px;line-height:30px;font-size:19.6px;font-family:'Liberation Sans', sans-serif;color:#4a4a4a;font-weight:400;white-space:pre;">17268536...</div>
<div style="position:absolute;left:775.40px;top:463.01px;line-height:30px;font-size:19.6px;font-family:'Liberation Sans', sans-serif;color:#4a4a4a;font-weight:400;white-space:pre;">USD</div>
<div style="position:absolute;left:914.00px;top:463.01px;line-height:30px;font-size:19.6px;font-family:'Liberation Sans', sans-serif;color:#4a4a4a;font-weight:400;white-space:pre;">A great pr...</div>
<div style="position:absolute;left:1052.60px;top:463.01px;line-height:30px;font-size:19.6px;font-family:'Liberation Sans', sans-serif;color:#4a4a4a;font-weight:400;white-space:pre;">95x62x70</div>
<div style="position:absolute;left:1191.20px;top:463.01px;line-height:30px;font-size:19.6px;font-family:'Liberation Sans', sans-serif;color:#4a4a4a;font-weight:400;white-space:pre;">3</div>
<div style="position:absolute;left:1329.80px;top:463.01px;line-height:30px;font-size:19.6px;font-family:'Liberation Sans', sans-serif;color:#4a4a4a;font-weight:400;white-space:pre;">false</div>
<div style="position:absolute;left:1468.40px;top:463.01px;line-height:30px;font-size:19.6px;font-family:'Liberation Sans', sans-serif;color:#4a4a4a;font-weight:400;white-space:pre;">5v1zfvbl</div>
<div style="position:absolute;left:1541.80px;top:53.60px;width:30px;height:600px;background:#f8f8f8;border-left:1px solid #e6e6e6;"></div>
<div style="position:absolute;left:1547.80px;top:57.50px;width:10px;height:600px;background:#c1c1c1;border-radius:5px;"></div>
</div>
<div style="position:absolute;left:1875px;top:1103.8px;width:66.5px;height:66.5px;border-radius:50%;background:#0b2a52;box-shadow:0 3px 14px rgba(0,0,0,0.18);"></div>
<svg style="position:absolute;left:1898.8px;top:1124px;overflow:visible" width="18" height="26" viewBox="0 0 18 26"><path d="M9.5 0.3 L0.3 14.3 L7.6 14.3 L8 25.6 L17.8 11.1 L10.4 11.1 Z" fill="#f8d12a" stroke="#f8d12a" stroke-width="0.6" stroke-linejoin="round"/></svg>
<div style="position:absolute;left:0px;top:1261.5px;width:1999px;height:2px;background:#000;"></div>
</body></html>
